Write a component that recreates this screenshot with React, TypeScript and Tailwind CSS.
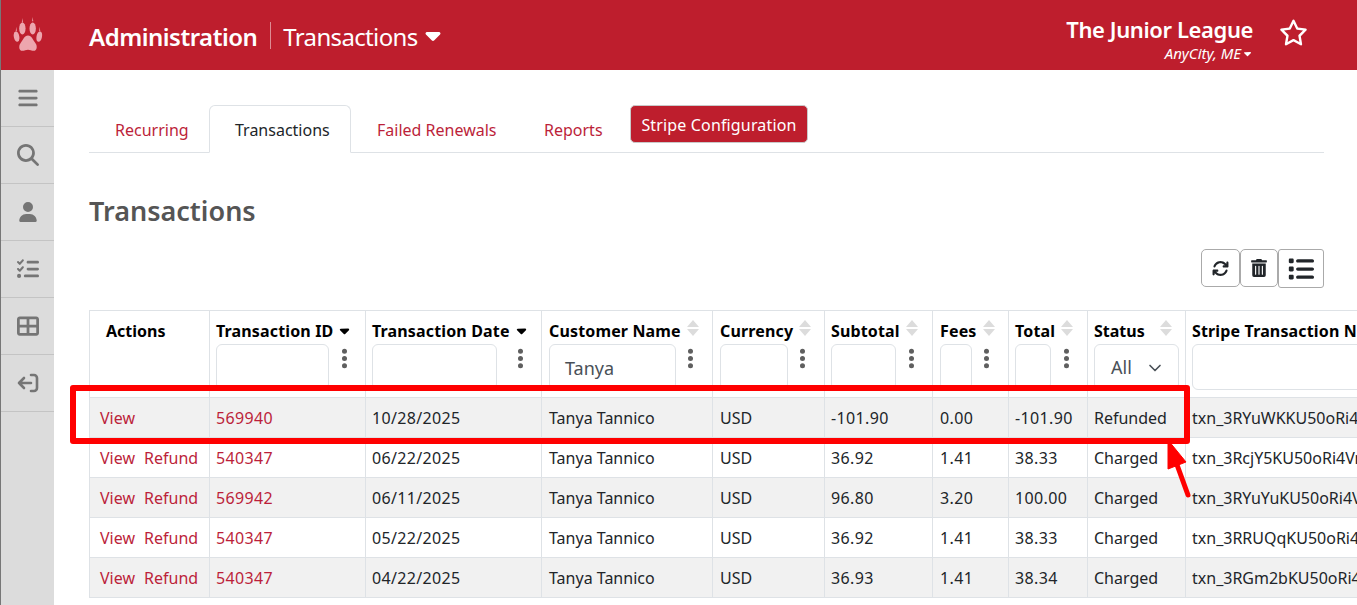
import React from "react";
import {
  FaArrowsRotate,
  FaBars,
  FaCaretDown,
  FaEllipsisVertical,
  FaList,
  FaListCheck,
  FaMagnifyingGlass,
  FaRegStar,
  FaTableCellsLarge,
  FaUser,
} from "react-icons/fa6";
import { FaTrashAlt } from "react-icons/fa";
import { LuChevronDown } from "react-icons/lu";

const font = { fontFamily: '"Noto Sans", sans-serif' };

type Column = {
  title: string;
  width: string;
  filter: string;
  sort: "down" | "both" | "none";
  value?: string;
  pad: string;
};

const columns: Column[] = [
  { title: "Transaction ID", width: "w-[156px]", filter: "w-[113px]", sort: "down", pad: "px-[6px]" },
  { title: "Transaction Date", width: "w-[176px]", filter: "w-[125px]", sort: "down", pad: "px-[6px]" },
  { title: "Customer Name", width: "w-[171px]", filter: "w-[127px]", sort: "both", value: "Tanya", pad: "px-[7px]" },
  { title: "Currency", width: "w-[112px]", filter: "w-[68px]", sort: "both", pad: "px-[7px]" },
  { title: "Subtotal", width: "w-[108px]", filter: "w-[65px]", sort: "both", pad: "px-[6px]" },
  { title: "Fees", width: "w-[76px]", filter: "w-[32px]", sort: "both", pad: "px-[7px]" },
  { title: "Total", width: "w-[79px]", filter: "w-[36px]", sort: "both", pad: "px-[6px]" },
];

const rows = [
  ["View", "", "569940", "10/28/2025", "-101.90", "0.00", "-101.90", "Refunded", "txn_3RYuWKKU50oRi4VnQ"],
  ["View", "Refund", "540347", "06/22/2025", "36.92", "1.41", "38.33", "Charged", "txn_3RcjY5KU50oRi4VnQ"],
  ["View", "Refund", "569942", "06/11/2025", "96.80", "3.20", "100.00", "Charged", "txn_3RYuYuKU50oRi4VnQ"],
  ["View", "Refund", "540347", "05/22/2025", "36.92", "1.41", "38.33", "Charged", "txn_3RRUQqKU50oRi4VnQ"],
  ["View", "Refund", "540347", "04/22/2025", "36.93", "1.41", "38.34", "Charged", "txn_3RGm2bKU50oRi4VnQ"],
];

function Paw() {
  return (
    <svg width="30" height="36" viewBox="0 0 32 33" preserveAspectRatio="none" fill="#eda6ae">
      <path d="M16 17c-4 0-5 4-8 7-2 2-2 7 2 7 2 0 4-1 6-1s4 1 6 1c4 0 4-5 2-7-3-3-4-7-8-7z" />
      <ellipse cx="10" cy="10.5" rx="3.4" ry="5.5" />
      <ellipse cx="21" cy="10.5" rx="3.4" ry="5.5" />
      <ellipse cx="3.8" cy="18" rx="2.9" ry="4.8" transform="rotate(-12 3.8 18)" />
      <ellipse cx="28" cy="18" rx="2.9" ry="4.8" transform="rotate(12 28 18)" />
      <path d="M10 1l.6 4h-1.2zM21 0l.6 4h-1.2zM3.5 9l.6 4h-1.2zM28.5 9l.6 4h-1.2z" />
    </svg>
  );
}

function ExitIcon() {
  return (
    <svg width="22" height="20" viewBox="0 0 22 20" fill="none" stroke="#757575" strokeWidth="2.6" strokeLinecap="round" strokeLinejoin="round">
      <path d="M14 2h3a3 3 0 0 1 3 3v10a3 3 0 0 1-3 3h-3" />
      <path d="M14 10H2M7 5l-5 5 5 5" />
    </svg>
  );
}

function SortArrows({ className = "ml-[6px]" }: { className?: string }) {
  return (
    <span className={`flex flex-col gap-[2px] -mt-[6px] ${className}`}>
      <span className="w-0 h-0 border-x-[6px] border-x-transparent border-b-[7px] border-b-[#dcdcdc]" />
      <span className="w-0 h-0 border-x-[6px] border-x-transparent border-t-[7px] border-t-[#dcdcdc]" />
    </span>
  );
}

function HeaderCell({ col }: { col: Column }) {
  return (
    <th className={`${col.width} ${col.pad} border border-[#dee2e6] pt-[7px] align-top text-left`}>
      <div className="flex items-center h-[25px] text-[16px] font-bold tracking-[0.15px] text-black whitespace-nowrap">
        <span>{col.title}</span>
        {col.sort === "down" ? (
          <FaCaretDown className="ml-[4px] text-[15px]" />
        ) : (
          <SortArrows />
        )}
      </div>
      <div className="flex items-start mt-[1px]">
        <div className={`${col.filter} shrink-0 h-[46px] border border-[#dee2e6] rounded-[6px] bg-white pl-[15px] pt-[10px] text-[18px] font-normal leading-[27px] text-[#495057]`}>
          {col.value}
        </div>
        <FaEllipsisVertical className="ml-auto mr-[3px] mt-[3px] text-[#5f5f5f] text-[23px]" />
      </div>
    </th>
  );
}

export default function App() {
  const link = "text-[#bc1f3a]";
  const cell = "border border-[#dee2e6] text-[16px] whitespace-nowrap overflow-hidden";
  const num = "tracking-[0.35px]";
  return (
    <div className="w-[1357px] h-[605px] overflow-hidden flex flex-col bg-white text-[#212529]" style={font}>
      <header className="h-[70px] shrink-0 flex items-center bg-[#be1e2d] text-white border-l border-[#777]">
        <div className="w-[53px] flex justify-center">
          <Paw />
        </div>
        <span className="ml-[35px] mt-[3px] text-[24px] font-semibold tracking-[-0.5px]">Administration</span>
        <span className="ml-[13px] w-px h-[27px] bg-[#dd8b93]" />
        <span className="ml-[12px] mt-[3px] text-[24px] tracking-[-0.65px]">Transactions</span>
        <FaCaretDown className="ml-[3px] text-[24px]" />
        <div className="ml-auto flex flex-col items-end mr-[104px] mt-[9px]">
          <span className="text-[22px] leading-[27px] font-semibold tracking-[-0.4px]">The Junior League</span>
          <span className="flex items-center text-[15px] leading-[20px] italic">
            AnyCity, ME
            <FaCaretDown className="text-[11px] ml-[1px]" />
          </span>
        </div>
        <FaRegStar className="absolute left-[1279px] top-[18px] text-[29px]" />
      </header>

      <div className="flex flex-1 min-h-0">
        <aside className="w-[54px] shrink-0 bg-[#dcdcdc] border-l border-[#777] text-[#757575]">
          {[
            <FaBars className="text-[22px]" />,
            <FaMagnifyingGlass className="text-[22px]" />,
            <FaUser className="text-[20px]" />,
            <FaListCheck className="text-[22px]" />,
            <FaTableCellsLarge className="text-[22px]" />,
            <ExitIcon />,
          ].map((icon, i) => (
            <div key={i} className="h-[57px] flex items-center justify-center border-b border-[#c4c4c4]">
              {icon}
            </div>
          ))}
        </aside>

        <main className="flex-1 min-w-0 pl-[35px] pr-[33px] pt-[35px]">
          <nav className="flex items-start h-[48px] border-b border-[#dee2e6] text-[16px]">
            <a className={`w-[120px] h-[48px] pl-[26px] pt-[13px] ${link}`}>Recurring</a>
            <a className="w-[142px] h-[48px] pl-[25px] pt-[12px] text-[#212529] bg-white border border-[#dee2e6] border-b-white rounded-t-[6px]">
              Transactions
            </a>
            <a className={`w-[167px] h-[48px] pl-[26px] pt-[13px] ${link}`}>Failed Renewals</a>
            <a className={`w-[112px] h-[48px] pl-[26px] pt-[13px] ${link}`}>Reports</a>
            <button className="h-[38px] w-[178px] pt-[1px] bg-[#be1e2d] text-white rounded-[5px] border border-[#c9c9c9] tracking-[0.15px]">
              Stripe Configuration
            </button>
          </nav>

          <h1 className="mt-[37px] text-[27px] leading-[42px] font-semibold text-[#555]">Transactions</h1>

          <div className="flex justify-end mt-[17px] h-[39px] text-[#212529]">
            <button className="w-[39px] h-[38px] flex items-center justify-center border border-[#aaa] rounded-[5px] bg-white">
              <FaArrowsRotate className="text-[17px]" />
            </button>
            <button className="w-[38px] h-[38px] flex items-center justify-center border border-[#aaa] rounded-[5px] bg-white">
              <FaTrashAlt className="text-[18px]" />
            </button>
            <button className="w-[46px] h-[39px] flex items-center justify-center border border-[#aaa] rounded-[3px] bg-white">
              <FaList className="text-[26px]" />
            </button>
          </div>

          <div className="-mr-[33px] mt-[22px] overflow-hidden">
            <table className="table-fixed w-[1535px] border-collapse">
              <thead>
                <tr className="h-[87px]">
                  <th className="w-[120px] border border-[#dee2e6] pl-[16px] pt-[7px] align-top text-left">
                    <div className="h-[25px] flex items-center text-[16px] font-bold text-black">Actions</div>
                  </th>
                  {columns.map((col) => (
                    <HeaderCell key={col.title} col={col} />
                  ))}
                  <th className="w-[98px] border border-[#dee2e6] px-[6px] pt-[7px] align-top text-left">
                    <div className="flex items-center justify-between h-[25px] text-[16px] font-bold text-black">
                      <span>Status</span>
                      <SortArrows className="mr-[7px]" />
                    </div>
                    <div className="mt-[1px] w-[85px] h-[46px] border border-[#dee2e6] rounded-[6px] flex items-center pl-[16px] pt-[1px] gap-[13px] text-[18px] font-normal text-[#495057]">
                      All
                      <LuChevronDown className="text-[20px]" />
                    </div>
                  </th>
                  <th className="w-[439px] border border-[#dee2e6] px-[6px] pt-[7px] align-top text-left">
                    <div className="h-[25px] flex items-center text-[16px] font-bold tracking-[0.15px] text-black whitespace-nowrap">
                      Stripe Transaction Number
                    </div>
                    <div className="mt-[1px] h-[46px] border border-[#dee2e6] rounded-[6px]" />
                  </th>
                </tr>
              </thead>
              <tbody>
                {rows.map((row, i) => (
                  <tr key={i} className={`h-[40px] ${i % 2 === 0 ? "bg-[#f1f1f1]" : "bg-white"}`}>
                    <td className={`border border-[#dee2e6] pl-[10px] text-[16px] whitespace-nowrap ${link}`}>
                      {row[0]}
                      {row[1] && <span className="ml-[9px]">{row[1]}</span>}
                    </td>
                    <td className={`${cell} ${num} px-[6px] ${link}`}>{row[2]}</td>
                    <td className={`${cell} ${num} px-[6px]`}>{row[3]}</td>
                    <td className={`${cell} px-[7px]`}>Tanya Tannico</td>
                    <td className={`${cell} px-[7px]`}>USD</td>
                    <td className={`${cell} ${num} px-[6px]`}>{row[4]}</td>
                    <td className={`${cell} ${num} px-[7px]`}>{row[5]}</td>
                    <td className={`${cell} ${num} px-[6px]`}>{row[6]}</td>
                    <td className={`${cell} px-[6px]`}>{row[7]}</td>
                    <td className={`${cell} px-[6px]`}>{row[8]}</td>
                  </tr>
                ))}
              </tbody>
            </table>
          </div>
        </main>
      </div>

      {/* annotation drawn over the screenshot */}
      <div className="absolute left-[70px] top-[385px] w-[1120px] h-[59px] border-[6px] border-[#ff0000] rounded-[3px]" />
      <svg className="absolute left-[1160px] top-[436px]" width="40" height="66" viewBox="0 0 40 66">
        <path d="M8 4L8 33 26 26z" fill="#ff0000" stroke="#ff0000" strokeLinejoin="round" />
        <path d="M16 26L28 59" stroke="#ff0000" strokeWidth="5" strokeLinecap="round" />
      </svg>
    </div>
  );
}
